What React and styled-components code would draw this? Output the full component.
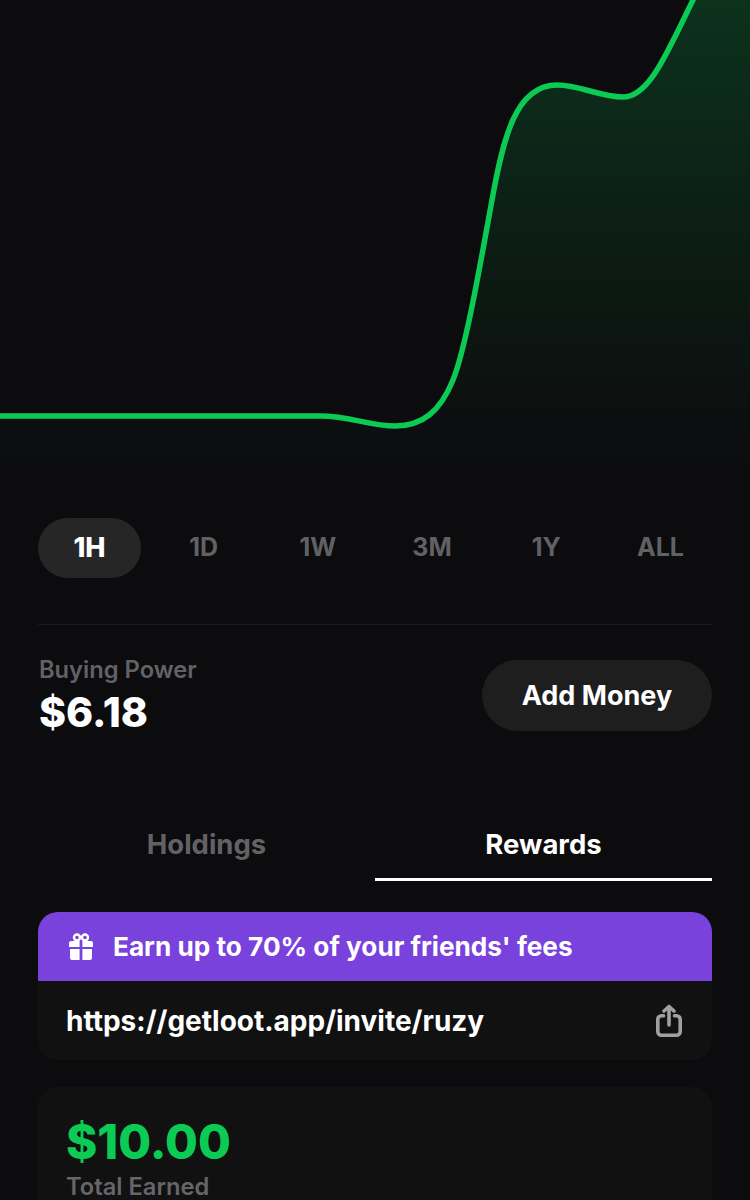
import React from "react";
import styled, { createGlobalStyle } from "styled-components";

const Global = createGlobalStyle`
  html, body { margin: 0; padding: 0; background: #0c0c0e; }
  body { font-family: Inter, "Liberation Sans", sans-serif; overflow: hidden; }
`;

const Page = styled.div`
  width: 750px;
  height: 1200px;
  overflow: hidden;
  background: #0c0c0e;
  display: flex;
  flex-direction: column;
`;

const ChartSvg = styled.svg`
  display: block;
  width: 750px;
  height: 518px;
  flex: none;
`;

const Content = styled.div`
  padding: 0 38px;
  display: flex;
  flex-direction: column;
`;

const RangeBar = styled.div`
  display: flex;
  justify-content: space-between;
  padding-bottom: 46px;
  border-bottom: 1px solid #1b1b1d;
`;

const RangeItem = styled.div`
  box-sizing: border-box;
  width: 103px;
  height: 60px;
  padding-bottom: 2px;
  border-radius: 30px;
  display: flex;
  align-items: center;
  justify-content: center;
  font-size: ${(p) => (p.$active ? "27px" : "25px")};
  font-weight: ${(p) => (p.$active ? 800 : 700)};
  color: ${(p) => (p.$active ? "#ffffff" : "#616164")};
  background: ${(p) => (p.$active ? "#262626" : "transparent")};
`;

const PowerRow = styled.div`
  display: flex;
  justify-content: space-between;
  align-items: flex-start;
  padding-top: 35px;
`;

const PowerInfo = styled.div`
  display: flex;
  flex-direction: column;
  margin-top: -4px;
  margin-left: 1px;
`;

const PowerLabel = styled.div`
  font-size: 23.7px;
  line-height: 28px;
  font-weight: 600;
  color: #626265;
`;

const PowerValue = styled.div`
  font-size: 41px;
  line-height: 46px;
  margin-top: 5px;
  font-weight: 800;
  color: #ffffff;
`;

const AddMoney = styled.div`
  width: 230px;
  height: 71px;
  border-radius: 36px;
  background: #1e1e1e;
  color: #ffffff;
  font-size: 27px;
  font-weight: 700;
  display: flex;
  align-items: center;
  justify-content: center;
`;

const Tabs = styled.div`
  display: grid;
  grid-template-columns: 337px 337px;
  margin-top: 93px;
`;

const Tab = styled.div`
  box-sizing: border-box;
  height: 53px;
  display: flex;
  align-items: flex-start;
  justify-content: center;
  font-size: 27.5px;
  line-height: 32px;
  font-weight: 700;
  color: ${(p) => (p.$active ? "#ffffff" : "#626265")};
  border-bottom: 3px solid ${(p) => (p.$active ? "#ffffff" : "transparent")};
`;

const InviteCard = styled.div`
  margin-top: 31px;
  border-radius: 20px;
  overflow: hidden;
  background: #111112;
`;

const Banner = styled.div`
  height: 69px;
  background: #7a42dc;
  display: flex;
  align-items: center;
  gap: 19px;
  padding-left: 30px;
  color: #ffffff;
  font-size: 26.2px;
  font-weight: 700;
`;

const LinkRow = styled.div`
  height: 79px;
  display: flex;
  align-items: center;
  justify-content: space-between;
  padding: 0 30px 0 28px;
  color: #ffffff;
  font-size: 28px;
  font-weight: 700;
`;

const EarnCard = styled.div`
  margin-top: 27px;
  border-radius: 20px;
  background: #111112;
  padding: 28px 28px 40px;
`;

const EarnValue = styled.div`
  font-size: 47.5px;
  line-height: 54px;
  font-weight: 800;
  color: #0ccb55;
`;

const EarnLabel = styled.div`
  margin-top: 4px;
  font-size: 23.7px;
  line-height: 28px;
  font-weight: 600;
  color: #666669;
`;

const CURVE =
  "M-4 416 L320 416 C350 416 370 426 395 426 C422 426 440 412 453 380 C466 348 481 260 492 200 C503 140 515 85 557 85 C580 85 600 97 623 97 C650 97 668 50 695 -4";

function Chart() {
  return (
    <ChartSvg viewBox="0 0 750 518">
      <defs>
        <linearGradient id="area" x1="0" y1="0" x2="0" y2="1">
          <stop offset="0" stopColor="#0ccb55" stopOpacity="0.2" />
          <stop offset="0.45" stopColor="#0ccb55" stopOpacity="0.1" />
          <stop offset="0.85" stopColor="#0ccb55" stopOpacity="0.02" />
          <stop offset="1" stopColor="#0ccb55" stopOpacity="0" />
        </linearGradient>
      </defs>
      <path d={`${CURVE} L754 -4 L754 480 L-4 480 Z`} fill="url(#area)" />
      <path d={CURVE} fill="none" stroke="#0ccb55" strokeWidth="5.5" />
    </ChartSvg>
  );
}

function GiftIcon() {
  return (
    <svg width="26" height="28" viewBox="0 0 26 28" fill="none">
      <circle cx="9" cy="4.500" r="3" stroke="#fff" strokeWidth="2.4" />
      <circle cx="17" cy="4.500" r="3" stroke="#fff" strokeWidth="2.4" />
      <path d="M1 10 a2 2 0 0 1 2-2 h8.600 v6 H1 Z M14.400 8 H23 a2 2 0 0 1 2 2 v4 H14.400 Z" fill="#fff" />
      <path d="M2 16 h9.600 v11 H4 a2 2 0 0 1-2-2 Z M14.400 16 H24 v9 a2 2 0 0 1-2 2 h-7.600 Z" fill="#fff" />
    </svg>
  );
}

function ShareIcon() {
  return (
    <svg width="26" height="33" viewBox="0 0 26 33" fill="none" stroke="#a0a0a0" strokeWidth="3.6" strokeLinecap="round" strokeLinejoin="round">
      <path d="M7.500 11.800 H5.500 a3.700 3.700 0 0 0-3.700 3.700 V27.500 a3.700 3.700 0 0 0 3.700 3.700 h15 a3.700 3.700 0 0 0 3.700-3.700 V15.500 a3.700 3.700 0 0 0-3.700-3.700 h-2" />
      <path d="M13 21 V2.500 M8 7 L13 2.500 L18 7" />
    </svg>
  );
}

export default function App() {
  return (
    <Page>
      <Global />
      <Chart />
      <Content>
        <RangeBar>
          {["1H", "1D", "1W", "3M", "1Y", "ALL"].map((r, i) => (
            <RangeItem key={r} $active={i === 0}>{r}</RangeItem>
          ))}
        </RangeBar>
        <PowerRow>
          <PowerInfo>
            <PowerLabel>Buying Power</PowerLabel>
            <PowerValue>$6.18</PowerValue>
          </PowerInfo>
          <AddMoney>Add Money</AddMoney>
        </PowerRow>
        <Tabs>
          <Tab>Holdings</Tab>
          <Tab $active>Rewards</Tab>
        </Tabs>
        <InviteCard>
          <Banner><GiftIcon />Earn up to 70% of your friends' fees</Banner>
          <LinkRow>https://getloot.app/invite/ruzy<ShareIcon /></LinkRow>
        </InviteCard>
        <EarnCard>
          <EarnValue>$10.00</EarnValue>
          <EarnLabel>Total Earned</EarnLabel>
        </EarnCard>
      </Content>
    </Page>
  );
}
